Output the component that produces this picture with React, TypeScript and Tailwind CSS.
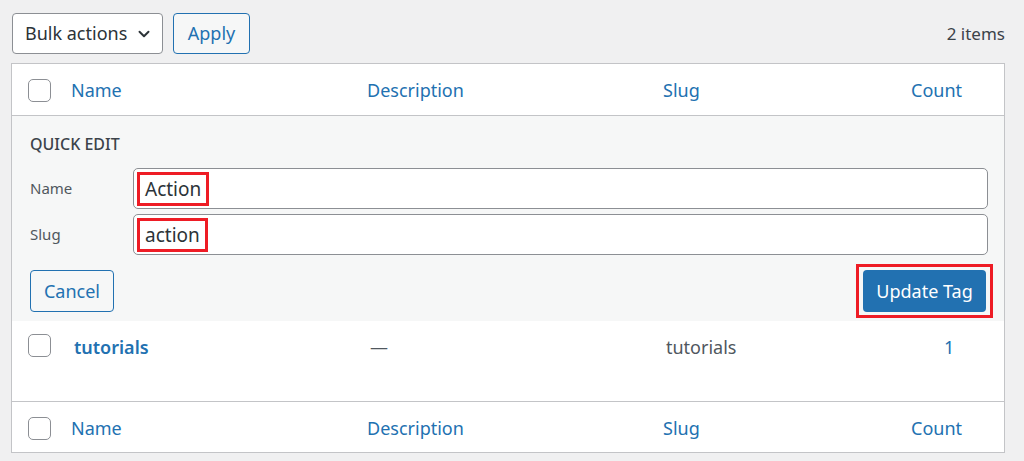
import { ChevronDown } from "lucide-react";

const font = { fontFamily: '"Noto Sans", "Open Sans", Arial, sans-serif' };

function Checkbox() {
  return <span className="block h-[23px] w-[23px] rounded-[5px] border border-[#8c8f94] bg-white" />;
}

function ColumnHeads() {
  return (
    <>
      <div className="w-[48px] pl-[16px]">
        <Checkbox />
      </div>
      <div className="w-[296px] pl-[11px]">Name</div>
      <div className="w-[296px] pl-[11px]">Description</div>
      <div className="w-[248px] pl-[11px]">Slug</div>
      <div className="pl-[11px]">Count</div>
    </>
  );
}

export default function App() {
  return (
    <div className="h-[461px] w-[1024px] bg-[#f0f0f1] pt-[13px] text-[#3c434a]" style={font}>
      <div className="flex items-center pl-[12px] pr-[19px]">
        <div className="flex h-[41px] w-[151px] items-center justify-between rounded-[4px] border border-[#8c8f94] bg-white pl-[12px] pr-[9px] text-[18px] text-[#2c3338]">
          <span>Bulk actions</span>
          <ChevronDown className="h-[18px] w-[18px]" strokeWidth={2.6} />
        </div>
        <div className="ml-[10px] flex h-[41px] w-[77px] items-center justify-center rounded-[4px] border border-[#2271b1] bg-[#f6f7f7] text-[18px] text-[#2271b1]">
          Apply
        </div>
        <div className="ml-auto text-[17px] text-[#3c434a]">2 items</div>
      </div>

      <div className="ml-[11px] mt-[9px] w-[994px] border border-[#c3c4c7] bg-white">
        <div className="flex h-[52px] items-center border-b border-[#c3c4c7] pt-[2px] text-[18px] text-[#2271b1]">
          <ColumnHeads />
        </div>

        <div className="bg-[#f6f7f7] pb-[3px] pl-[18px] pr-[16px] pt-[16px]">
          <div className="text-[16px] font-medium text-[#3c434a]">QUICK EDIT</div>
          <div className="mt-[12px] flex flex-col gap-[5px]">
            <div className="flex items-center">
              <span className="w-[103px] text-[15px] text-[#50575e]">Name</span>
              <div className="flex h-[41px] flex-1 items-center rounded-[5px] border border-[#8c8f94] bg-white pl-[3px]">
                <span className="border-[3px] border-[#ee1c25] px-[5px] text-[19px] leading-[28px] text-[#2c3338]">
                  Action
                </span>
              </div>
            </div>
            <div className="flex items-center">
              <span className="w-[103px] text-[15px] text-[#50575e]">Slug</span>
              <div className="flex h-[41px] flex-1 items-center rounded-[5px] border border-[#8c8f94] bg-white pl-[3px]">
                <span className="border-[3px] border-[#ee1c25] px-[5px] text-[19px] leading-[28px] text-[#2c3338]">
                  action
                </span>
              </div>
            </div>
          </div>
          <div className="mt-[9px] flex items-center justify-between">
            <div className="flex h-[42px] w-[84px] items-center justify-center rounded-[4px] border border-[#2271b1] bg-[#f6f7f7] text-[18px] text-[#2271b1]">
              Cancel
            </div>
            <div className="-mr-[5px] border-[3px] border-[#ee1c25] px-[4px] py-[3px]">
              <div className="flex h-[42px] w-[123px] items-center justify-center rounded-[4px] bg-[#2271b1] text-[18px] text-white">
                Update Tag
              </div>
            </div>
          </div>
        </div>

        <div className="flex h-[81px] items-start border-b border-[#c3c4c7] pt-[13px] text-[18px]">
          <div className="w-[48px] pl-[16px]">
            <Checkbox />
          </div>
          <div className="w-[296px] pl-[14px] font-semibold text-[#2271b1]">tutorials</div>
          <div className="w-[296px] pl-[14px] text-[#50575e]">—</div>
          <div className="w-[248px] pl-[14px] text-[#50575e]">tutorials</div>
          <div className="pl-[44px] text-[#2271b1]">1</div>
        </div>

        <div className="flex h-[50px] items-center pt-[2px] text-[18px] text-[#2271b1]">
          <ColumnHeads />
        </div>
      </div>
    </div>
  );
}
